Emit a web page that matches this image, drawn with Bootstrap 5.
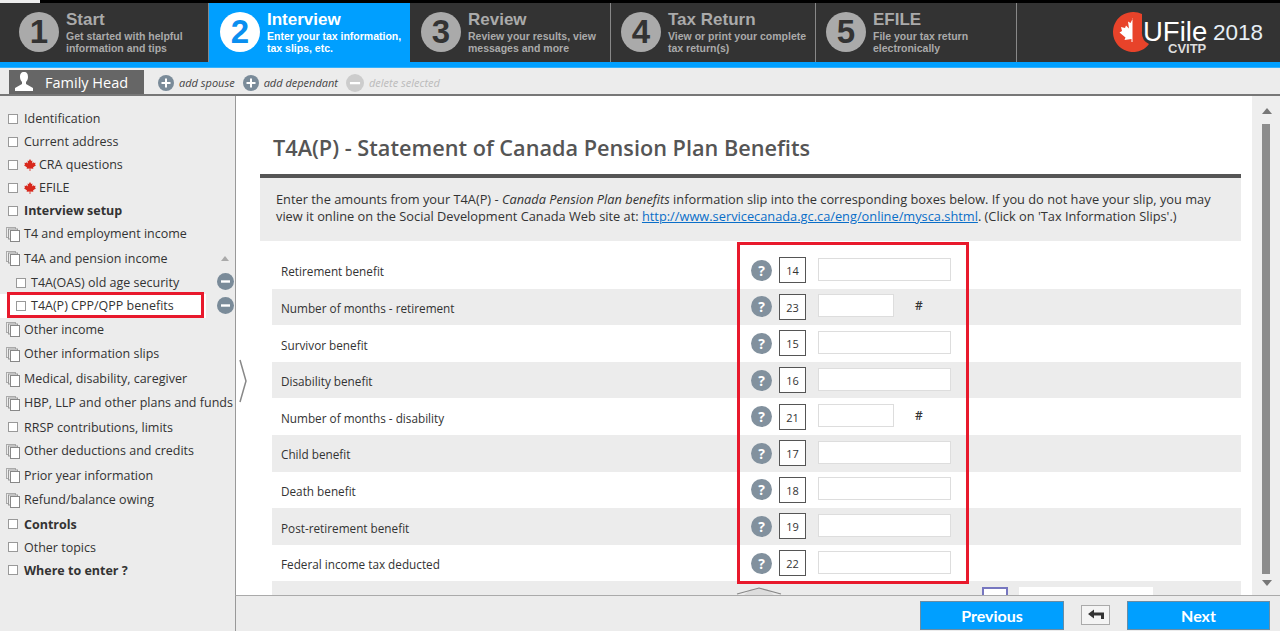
<!DOCTYPE html>
<html lang="en">
<head>
  <meta charset="UTF-8">
  <title>UFile 2018 CVITP</title>
  <link href="https://cdn.jsdelivr.net/npm/bootstrap@5.3.0/dist/css/bootstrap.min.css" rel="stylesheet">
  <script src="https://cdn.jsdelivr.net/npm/bootstrap@5.3.0/dist/js/bootstrap.bundle.min.js"></script>
  <style>
    html, body { height: 631px; overflow: hidden; }
    body { font-family: "Open Sans", "Noto Sans", sans-serif; font-size: 12px; color: #333; background: #ececec; position: relative; }
    .top-strip { height: 3px; background: #000; margin-left: 40px; }
    .step-bar { height: 59px; background: #333; }
    .step { height: 59px; padding-left: 19px; font-family: "Liberation Sans", sans-serif; color: #aaa; border-right: 1px solid #888; flex: none; }
    .step.is-active { background: #009fff; color: #fff; border-right: 0; padding-left: 11px; }
    .step-num { width: 40px; height: 40px; border-radius: 50%; background: #aaa; color: #333; font-size: 33px; font-weight: 700; line-height: 40px; text-align: center; margin-right: 7px; flex: none; margin-top: 9px; }
    .is-active .step-num { background: #fff; color: #0a8ff0; }
    .step-title { font-size: 17px; font-weight: 700; line-height: 20px; margin-top: 7px; }
    .step-desc { font-size: 10.5px; font-weight: 700; line-height: 12px; margin-top: 0; }
    .w-start { width: 209px; } .w-inter { width: 201px; }
    .w-review { width: 201px; padding-left: 11px; } .w-return { width: 205px; padding-left: 10px; } .w-efile { width: 201px; padding-left: 10px; }
    .logo-box { width: 264px; font-family: "Liberation Sans", sans-serif; color: #fff; position: relative; }
    .logo-mark { position: absolute; left: 96px; top: 9px; }
    .logo-name { position: absolute; left: 126px; top: 12px; font-size: 27.500px; line-height: 34px; }
    .logo-year { position: absolute; left: 196px; top: 16px; font-size: 22.500px; line-height: 28px; color: #e6eef5; }
    .logo-sub { position: absolute; left: 151px; top: 39px; font-size: 13px; font-weight: 700; line-height: 13px; color: #ddd; }
    .blue-strip { height: 6px; background: #009fff; border-bottom: 1px solid #33b2ff; }
    .tool-bar { height: 26px; background: #ececec; padding-left: 9px; }
    .head-tab { width: 135px; height: 24px; margin-top: 2px; background: #666; color: #fff; font-size: 14.500px; line-height: 26px; flex: none; margin-right: 14px; padding-left: 5px; }
    .head-ico { margin-right: 11px; flex: none; }
    .tool-link { font-style: italic; font-size: 11px; color: #444; margin-right: 8px; margin-top: 4px; }
    .tool-link.is-off { color: #bbb; }
    .round-ico { width: 16px; height: 16px; border-radius: 50%; background: #7a8b99; margin-right: 5px; flex: none; }
    .is-off .round-ico { background: #ccc; width: 18px; height: 18px; }
    .head-rule { height: 2px; background: #777; }
    .main-area { height: 499px; }
    .side-nav { width: 236px; border-right: 1px solid #999; padding: 11px 0 0 0; flex: none; font-size: 12.500px; color: #333; }
    .side-item { height: 23px; line-height: 23px; white-space: nowrap; padding-left: 8px; }
    .side-item.is-stack { height: 24.600px; line-height: 24.600px; padding-left: 6px; }
    .side-item.is-sub { height: 23.200px; line-height: 23.200px; padding-left: 16px; width: 206px; }
    .side-item.is-current { background: #fff; }
    .tick { width: 10px; height: 10px; background: #fff; border: 1px solid #999; margin-right: 6px; flex: none; }
    .is-sub .tick { margin-right: 5px; }
    .stack-ico { margin-right: 4px; flex: none; }
    .leaf-ico { margin-right: 3px; flex: none; }
    .round-minus { position: absolute; left: 217px; }
    .minus-oas { top: 177px; }
    .minus-cpp { top: 201px; }
    .tri-up { position: absolute; left: 221px; top: 160px; width: 0; height: 0; border-left: 4px solid transparent; border-right: 4px solid transparent; border-bottom: 5px solid #aaa; }
    .content-pane { background: #fff; position: relative; overflow: hidden; }
    .form-pane { width: 1016px; padding: 0 11px 0 24px; flex: none; height: 499px; overflow: hidden; }
    .page-title { font-size: 21.700px; font-weight: 600; color: #555; padding: 36px 0 0 13px; margin: 0; line-height: 32px; height: 78px; }
    .page-intro { background: #ececec; border-top: 4px solid #555; height: 67px; padding: 13px 16px 0; font-size: 12.800px; line-height: 17px; color: #333; }
    .page-intro a { color: #0a6ec8; }
    .field-list { margin: 11px 0 0 12px; }
    .field-row { height: 36.600px; font-size: 11.750px; color: #333; }
    .field-row:nth-child(even) { background: #ececec; }
    .field-label { width: 479px; padding-left: 9px; flex: none; padding-top: 4px; }
    .help-ico { width: 21px; height: 21px; border-radius: 50%; background: #82919e; color: #fff; font-weight: 700; font-size: 14px; line-height: 21px; text-align: center; margin-right: 7px; flex: none; }
    .box-no { width: 27px; height: 26px; border: 1px solid #555; background: #fff; font-size: 11px; line-height: 25px; text-align: center; margin-right: 12px; flex: none; }
    .field-row .amt { width: 133px; height: 23px; border: 1px solid #ddd; border-radius: 0; padding: 0; flex: none; margin-bottom: 2px; }
    .field-row .amt.is-short { width: 76px; }
    .hash-mark { margin-left: 21px; font-weight: 600; font-size: 12px; margin-bottom: 2px; }
    .extra-box { width: 26px; height: 26px; background: #fff; border: 2px solid #7777c0; margin: 6px 0 0 710px; flex: none; }
    .extra-amt { width: 134px; height: 26px; background: #fff; margin: 6px 0 0 11px; flex: none; }
    .scroll-rail { width: 28px; background: #eee; position: relative; flex: none; height: 499px; }
    .scroll-thumb { position: absolute; left: 10px; top: 28px; width: 8px; height: 450px; background: #8c8c8c; }
    .scroll-up, .scroll-down { position: absolute; left: 10px; width: 0; height: 0; border-left: 5px solid transparent; border-right: 5px solid transparent; }
    .scroll-up { top: 12px; border-bottom: 6px solid #777; }
    .scroll-down { top: 484px; border-top: 6px solid #777; }
    .foot-bar { height: 36px; margin-left: 235px; border-left: 1px solid #999; border-top: 1px solid #aaa; background: #ececec; padding: 5px 10px 0 0; }
    .btn.go-btn { width: 144px; height: 29px; background: #009fff; border: 1px solid #6a8ca3; border-radius: 0; color: #fff; font-family: Lato, sans-serif; font-weight: 700; font-size: 16px; padding: 0; line-height: 27px; }
    .btn.go-btn.is-next { width: 143px; }
    .back-btn { width: 29px; height: 20px; border: 1px solid #aaa; background: #f4f4f4; margin: 4px 17px 0 17px; flex: none; }
    .red-mark { position: absolute; border: 3px solid #e8192c; pointer-events: none; }
    .red-fields { left: 737px; top: 242px; width: 232px; height: 342px; }
    .red-side { left: 7px; top: 292px; width: 197px; height: 26px; }
    .side-handle { position: absolute; left: 238px; top: 359px; }
    .up-handle { position: absolute; left: 736px; top: 587px; }
  </style>
</head>
<body>
  <div class="top-strip"></div>
  <div class="step-bar d-flex">
    <div class="step w-start d-flex"><div class="step-num">1</div><div><div class="step-title">Start</div><div class="step-desc">Get started with helpful<br>information and tips</div></div></div>
    <div class="step w-inter is-active d-flex"><div class="step-num">2</div><div><div class="step-title">Interview</div><div class="step-desc">Enter your tax information,<br>tax slips, etc.</div></div></div>
    <div class="step w-review d-flex"><div class="step-num">3</div><div><div class="step-title">Review</div><div class="step-desc">Review your results, view<br>messages and more</div></div></div>
    <div class="step w-return d-flex"><div class="step-num">4</div><div><div class="step-title">Tax Return</div><div class="step-desc">View or print your complete<br>tax return(s)</div></div></div>
    <div class="step w-efile d-flex"><div class="step-num">5</div><div><div class="step-title">EFILE</div><div class="step-desc">File your tax return<br>electronically</div></div></div>
    <div class="logo-box flex-grow-1">
      <svg class="logo-mark" width="40" height="40" viewBox="0 0 40 40"><path d="M20 0a20 20 0 1 0 16 32 13 13 0 0 1-7-13V2a20 20 0 0 0-9-2z" fill="#e8432a"/><path d="M20 6l-2.500 5-2.500-1.500 1 7-3-3-1 2.500-4-1 1 4-2.500 1.500 6 5-1 2.500 7-1V30h1V6z" fill="#fff"/></svg>
      <span class="logo-name">UFile</span><span class="logo-year">2018</span><span class="logo-sub">CVITP</span>
    </div>
  </div>
  <div class="blue-strip"></div>
  <div class="tool-bar d-flex align-items-center">
    <div class="head-tab d-flex">
      <svg width="20" height="22" viewBox="0 0 20 22" class="head-ico"><path d="M10 2c3 0 4 2 4 5 0 2-1 4-2 5v2l7 4v3H1v-3l7-4v-2C7 11 6 9 6 7c0-3 1-5 4-5z" fill="#fff"/></svg>
      <span>Family Head</span>
    </div>
    <div class="tool-link d-flex align-items-center"><svg class="round-ico" viewBox="0 0 16 16"><path d="M8 3.500v9M3.500 8h9" stroke="#fff" stroke-width="2"/></svg>add spouse</div>
    <div class="tool-link d-flex align-items-center"><svg class="round-ico" viewBox="0 0 16 16"><path d="M8 3.500v9M3.500 8h9" stroke="#fff" stroke-width="2"/></svg>add dependant</div>
    <div class="tool-link is-off d-flex align-items-center"><svg class="round-ico" viewBox="0 0 16 16"><path d="M3.500 8h9" stroke="#fff" stroke-width="2"/></svg>delete selected</div>
  </div>
  <div class="head-rule"></div>

  <div class="main-area d-flex">
    <div class="side-nav position-relative">
      <svg width="0" height="0" class="position-absolute">
        <symbol id="stack" viewBox="0 0 14 15"><rect x=".5" y=".5" width="9" height="10" fill="#ececec" stroke="#aaa"/><rect x="2.500" y="2" width="9" height="10" fill="#ececec" stroke="#999"/><rect x="4.500" y="3.500" width="9" height="11" fill="#fff" stroke="#888"/></symbol>
        <symbol id="leaf" viewBox="0 0 12 12"><path d="M6 0L4.800 2 3.600 1.400 4 4.400 2.600 3 2.200 4 .4 3.700 1 5.600 0 6.200 3 8.600l-.4 1.200 3-.4V12h.8V9.400l3 .4L9 8.600l3-2.400-1-.6.6-1.900L9.800 4 9.400 3 8 4.400l.4-3-1.200.6z" fill="#d8281c"/></symbol>
      </svg>
      <div class="side-item d-flex align-items-center"><span class="tick"></span>Identification</div>
      <div class="side-item d-flex align-items-center"><span class="tick"></span>Current address</div>
      <div class="side-item d-flex align-items-center"><span class="tick"></span><svg class="leaf-ico" width="12" height="12"><use href="#leaf"/></svg>CRA questions</div>
      <div class="side-item d-flex align-items-center"><span class="tick"></span><svg class="leaf-ico" width="12" height="12"><use href="#leaf"/></svg>EFILE</div>
      <div class="side-item d-flex align-items-center fw-bold"><span class="tick"></span>Interview setup</div>
      <div class="side-item is-stack d-flex align-items-center"><svg class="stack-ico" width="14" height="15"><use href="#stack"/></svg>T4 and employment income</div>
      <div class="side-item is-stack d-flex align-items-center"><svg class="stack-ico" width="14" height="15"><use href="#stack"/></svg>T4A and pension income</div>
      <div class="side-item is-sub d-flex align-items-center"><span class="tick"></span>T4A(OAS) old age security</div>
      <div class="side-item is-sub is-current d-flex align-items-center"><span class="tick"></span>T4A(P) CPP/QPP benefits</div>
      <div class="side-item is-stack d-flex align-items-center"><svg class="stack-ico" width="14" height="15"><use href="#stack"/></svg>Other income</div>
      <div class="side-item is-stack d-flex align-items-center"><svg class="stack-ico" width="14" height="15"><use href="#stack"/></svg>Other information slips</div>
      <div class="side-item is-stack d-flex align-items-center"><svg class="stack-ico" width="14" height="15"><use href="#stack"/></svg>Medical, disability, caregiver</div>
      <div class="side-item is-stack d-flex align-items-center"><svg class="stack-ico" width="14" height="15"><use href="#stack"/></svg>HBP, LLP and other plans and funds</div>
      <div class="side-item d-flex align-items-center"><span class="tick"></span>RRSP contributions, limits</div>
      <div class="side-item is-stack d-flex align-items-center"><svg class="stack-ico" width="14" height="15"><use href="#stack"/></svg>Other deductions and credits</div>
      <div class="side-item is-stack d-flex align-items-center"><svg class="stack-ico" width="14" height="15"><use href="#stack"/></svg>Prior year information</div>
      <div class="side-item is-stack d-flex align-items-center"><svg class="stack-ico" width="14" height="15"><use href="#stack"/></svg>Refund/balance owing</div>
      <div class="side-item d-flex align-items-center fw-bold"><span class="tick"></span>Controls</div>
      <div class="side-item d-flex align-items-center"><span class="tick"></span>Other topics</div>
      <div class="side-item d-flex align-items-center fw-bold"><span class="tick"></span>Where to enter ?</div>
      <span class="tri-up"></span>
      <svg class="round-minus minus-oas" width="17" height="17" viewBox="0 0 17 17"><circle cx="8.500" cy="8.500" r="8.500" fill="#7a8b99"/><path d="M4 8.500h9" stroke="#fff" stroke-width="2.400"/></svg>
      <svg class="round-minus minus-cpp" width="17" height="17" viewBox="0 0 17 17"><circle cx="8.500" cy="8.500" r="8.500" fill="#7a8b99"/><path d="M4 8.500h9" stroke="#fff" stroke-width="2.400"/></svg>
    </div>

    <div class="content-pane flex-grow-1 d-flex">
      <div class="form-pane">
        <h4 class="page-title">T4A(P) - Statement of Canada Pension Plan Benefits</h4>
        <div class="page-intro">Enter the amounts from your T4A(P) - <em>Canada Pension Plan benefits</em> information slip into the corresponding boxes below. If you do not have your slip, you may view it online on the Social Development Canada Web site at: <a href="#">http://www.servicecanada.gc.ca/eng/online/mysca.shtml</a>. (Click on 'Tax Information Slips'.)</div>
        <div class="field-list">
          <div class="field-row d-flex align-items-center"><div class="field-label">Retirement benefit</div><div class="help-ico">?</div><div class="box-no">14</div><input class="amt form-control"></div>
          <div class="field-row d-flex align-items-center"><div class="field-label">Number of months - retirement</div><div class="help-ico">?</div><div class="box-no">23</div><input class="amt is-short form-control"><span class="hash-mark">#</span></div>
          <div class="field-row d-flex align-items-center"><div class="field-label">Survivor benefit</div><div class="help-ico">?</div><div class="box-no">15</div><input class="amt form-control"></div>
          <div class="field-row d-flex align-items-center"><div class="field-label">Disability benefit</div><div class="help-ico">?</div><div class="box-no">16</div><input class="amt form-control"></div>
          <div class="field-row d-flex align-items-center"><div class="field-label">Number of months - disability</div><div class="help-ico">?</div><div class="box-no">21</div><input class="amt is-short form-control"><span class="hash-mark">#</span></div>
          <div class="field-row d-flex align-items-center"><div class="field-label">Child benefit</div><div class="help-ico">?</div><div class="box-no">17</div><input class="amt form-control"></div>
          <div class="field-row d-flex align-items-center"><div class="field-label">Death benefit</div><div class="help-ico">?</div><div class="box-no">18</div><input class="amt form-control"></div>
          <div class="field-row d-flex align-items-center"><div class="field-label">Post-retirement benefit</div><div class="help-ico">?</div><div class="box-no">19</div><input class="amt form-control"></div>
          <div class="field-row d-flex align-items-center"><div class="field-label">Federal income tax deducted</div><div class="help-ico">?</div><div class="box-no">22</div><input class="amt form-control"></div>
          <div class="field-row d-flex"><div class="extra-box"></div><div class="extra-amt"></div></div>
        </div>
      </div>
      <div class="scroll-rail"><span class="scroll-up"></span><span class="scroll-thumb"></span><span class="scroll-down"></span></div>
    </div>
  </div>

  <div class="foot-bar d-flex justify-content-end">
    <button class="btn go-btn">Previous</button>
    <div class="back-btn d-flex align-items-center justify-content-center"><svg width="18" height="12" viewBox="0 0 18 12"><path d="M1 5l6-4.500v3h10V10h-3V6.500H7v3z" fill="#333"/></svg></div>
    <button class="btn go-btn is-next">Next</button>
  </div>

  <svg class="side-handle" width="10" height="44" viewBox="0 0 10 44"><path d="M2 1l6 21-6 21" fill="none" stroke="#888" stroke-width="1.500"/></svg>
  <svg class="up-handle" width="46" height="8" viewBox="0 0 46 8"><path d="M15 2h16l7 6H8z" fill="#ddd"/><path d="M1 7L23 1l22 6" fill="none" stroke="#888" stroke-width="1.200"/></svg>
  <div class="red-mark red-fields"></div>
  <div class="red-mark red-side"></div>
</body>
</html>
